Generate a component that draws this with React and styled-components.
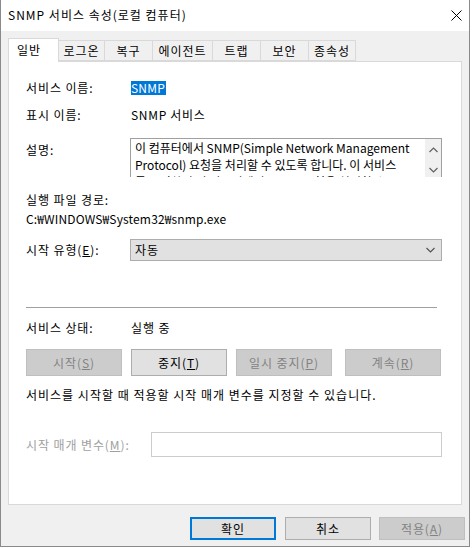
import React from 'react';
import styled, { createGlobalStyle } from 'styled-components';

const GlobalStyle = createGlobalStyle`
    html, body {
        margin: 0;
        padding: 0;
        background: #ffffff;
    }
    body {
        font-family: "Noto Sans CJK KR", "Noto Sans", sans-serif;
        font-size: 12px;
        letter-spacing: 0.9px;
        color: #000;
    }
`

const tabs = ['일반', '로그온', '복구', '에이전트', '트랩', '보안', '종속성']
const tabWidths = [51, 46, 48, 60, 48, 48, 47]

function Key({ children }) {
    return <u>{children}</u>
}

function App() {
    return (
        <>
            <GlobalStyle />
            <Window>
                <TitleBar>
                    <Title>SNMP 서비스 속성(로컬 컴퓨터)</Title>
                    <CloseBtn>
                        <svg width="11" height="11" viewBox="0 0 11 11">
                            <path d="M0.5 0.5 L10.5 10.5 M10.5 0.5 L0.5 10.5" stroke="#000" strokeWidth="1" fill="none" />
                        </svg>
                    </CloseBtn>
                </TitleBar>
                <Body>
                    <TabStrip>
                        {tabs.map((t, i) => (
                            <Tab key={t} $active={i === 0} $w={tabWidths[i]}>{t}</Tab>
                        ))}
                    </TabStrip>
                    <Panel>
                        <Row $h={16}>
                            <Label>서비스 이름:</Label>
                            <Selected>SNMP</Selected>
                        </Row>
                        <Row $h={16} $mt={11}>
                            <Label>표시 이름:</Label>
                            <Value $ls={0.7}>SNMP 서비스</Value>
                        </Row>
                        <Row $h={39} $mt={15} $top>
                            <Label $pt={4}>설명:</Label>
                            <DescBox>
                                <DescText>
                                    <div>이 컴퓨터에서 SNMP(Simple Network Management</div>
                                    <div>Protocol) 요청을 처리할 수 있도록 합니다. 이 서비스</div>
                                    <div>를 중지하면 이 컴퓨터에서 SNMP 요청을 처리할 수</div>
                                </DescText>
                                <ScrollBar>
                                    <svg width="9" height="6" viewBox="0 0 9 6">
                                        <path d="M0.5 5 L4.5 1 L8.5 5" stroke="#606060" strokeWidth="1.2" fill="none" />
                                    </svg>
                                    <svg width="9" height="6" viewBox="0 0 9 6">
                                        <path d="M0.5 1 L4.5 5 L8.5 1" stroke="#606060" strokeWidth="1.2" fill="none" />
                                    </svg>
                                </ScrollBar>
                            </DescBox>
                        </Row>
                        <Row $h={16} $mt={15}>
                            <Label>실행 파일 경로:</Label>
                        </Row>
                        <Row $h={16} $mt={3}>
                            <Value $ls={0.15}>C:₩WINDOWS₩System32₩snmp.exe</Value>
                        </Row>
                        <Row $h={22} $mt={12}>
                            <Label>시작 유형(<Key>E</Key>):</Label>
                            <Select>
                                <span>자동</span>
                                <svg width="9" height="6" viewBox="0 0 9 6">
                                    <path d="M0.5 1 L4.5 5 L8.5 1" stroke="#505050" strokeWidth="1.1" fill="none" />
                                </svg>
                            </Select>
                        </Row>
                        <Separator />
                        <Row $h={16} $mt={12}>
                            <Label>서비스 상태:</Label>
                            <Value>실행 중</Value>
                        </Row>
                        <ButtonRow>
                            <CtlButton $disabled>시작(<Key>S</Key>)</CtlButton>
                            <CtlButton>중지(<Key>T</Key>)</CtlButton>
                            <CtlButton $disabled>일시 중지(<Key>P</Key>)</CtlButton>
                            <CtlButton $disabled $ml={13}>계속(<Key>R</Key>)</CtlButton>
                        </ButtonRow>
                        <Row $h={16} $mt={11}>
                            <Value $ls={1}>서비스를 시작할 때 적용할 시작 매개 변수를 지정할 수 있습니다.</Value>
                        </Row>
                        <Row $h={25} $mt={29}>
                            <Label $w={125} $disabled>시작 매개 변수(<Key>M</Key>):</Label>
                            <ParamInput />
                        </Row>
                    </Panel>
                    <Footer>
                        <DlgButton $default>확인</DlgButton>
                        <DlgButton>취소</DlgButton>
                        <DlgButton $disabled>적용(<Key>A</Key>)</DlgButton>
                    </Footer>
                </Body>
            </Window>
        </>
    )
}

export default App;

// Styled Components

const Window = styled.div`
    width: 468px;
    height: 546px;
    border: 1px solid #8a8a8a;
    border-top: none;
    display: flex;
    flex-direction: column;
    background: #f0f0f0;
`

const TitleBar = styled.div`
    height: 31px;
    background: #ffffff;
    display: flex;
    align-items: center;
    justify-content: space-between;
    padding: 0 7px 0 7px;
    flex-shrink: 0;
`

const Title = styled.div`
    font-size: 12px;
    line-height: 16px;
    letter-spacing: 1px;
    margin-top: -1px;
`

const CloseBtn = styled.div`
    width: 11px;
    height: 11px;
    margin-top: -1px;
    display: flex;
    svg{ display: block; }
`

const Body = styled.div`
    flex: 1;
    display: flex;
    flex-direction: column;
    padding: 7px 0 0 7px;
`

const TabStrip = styled.div`
    display: flex;
    align-items: flex-end;
    height: 23px;
    position: relative;
    z-index: 1;
`

const Tab = styled.div`
    box-sizing: border-box;
    width: ${p => p.$w}px;
    height: ${p => p.$active ? 24 : 21}px;
    margin-bottom: ${p => p.$active ? -1 : 0}px;
    background: ${p => p.$active ? '#ffffff' : '#f0f0f0'};
    border: 1px solid #d9d9d9;
    border-bottom: ${p => p.$active ? 'none' : '1px solid #d9d9d9'};
    border-left: ${p => p.$active ? '1px solid #d9d9d9' : 'none'};
    display: flex;
    align-items: center;
    justify-content: ${p => p.$active ? 'flex-start' : 'center'};
    padding-left: ${p => p.$active ? 8 : 0}px;
    padding-bottom: ${p => p.$active ? 2 : 0}px;
    font-size: 12px;
    line-height: 16px;
    white-space: nowrap;
`

const Panel = styled.div`
    box-sizing: border-box;
    width: 454px;
    height: 444px;
    background: #ffffff;
    border: 1px solid #d9d9d9;
    padding: 18px 0 0 17px;
    display: flex;
    flex-direction: column;
`

const Row = styled.div`
    display: flex;
    align-items: ${p => p.$top ? 'flex-start' : 'center'};
    height: ${p => p.$h}px;
    margin-top: ${p => p.$mt || 0}px;
    flex-shrink: 0;
`

const Label = styled.div`
    width: ${p => p.$w || 105}px;
    flex-shrink: 0;
    font-size: 12px;
    line-height: 16px;
    padding-top: ${p => p.$pt || 0}px;
    color: ${p => p.$disabled ? '#a0a0a0' : '#000'};
    white-space: nowrap;
`

const Value = styled.div`
    font-size: 12px;
    line-height: 16px;
    letter-spacing: ${p => p.$ls ?? 0.9}px;
    white-space: nowrap;
`

const Selected = styled.div`
    background: #0078d7;
    color: #ffffff;
    font-size: 12px;
    line-height: 14px;
    height: 14px;
    letter-spacing: 0.2px;
    padding: 0 1px 0 0;
`

const DescBox = styled.div`
    box-sizing: border-box;
    width: 312px;
    height: 39px;
    margin-left: -1px;
    border: 1px solid #a0a0a0;
    border-bottom: none;
    display: flex;
    overflow: hidden;
`

const DescText = styled.div`
    flex: 1;
    padding: 0 0 0 4px;
    font-size: 12px;
    line-height: 17px;
    letter-spacing: 0;
    white-space: nowrap;
    overflow: hidden;
`

const ScrollBar = styled.div`
    width: 16px;
    background: #f0f0f0;
    display: flex;
    flex-direction: column;
    align-items: center;
    justify-content: space-between;
    padding: 8px 0 4px 0;
    box-sizing: border-box;
    svg{ display: block; }
`

const Select = styled.div`
    box-sizing: border-box;
    width: 312px;
    height: 22px;
    margin-left: -1px;
    background: #e1e1e1;
    border: 1px solid #adadad;
    display: flex;
    align-items: center;
    justify-content: space-between;
    padding: 0 6px 0 4px;
    font-size: 12px;
    line-height: 16px;
    svg{ display: block; }
`

const Separator = styled.div`
    width: 411px;
    height: 1px;
    background: #a0a0a0;
    margin-top: 46px;
    flex-shrink: 0;
`

const ButtonRow = styled.div`
    display: flex;
    gap: 9px;
    margin-top: 13px;
    flex-shrink: 0;
`

const CtlButton = styled.div`
    box-sizing: border-box;
    width: 96px;
    height: 27px;
    margin-left: ${p => p.$ml ? p.$ml - 9 : 0}px;
    background: ${p => p.$disabled ? '#cccccc' : '#e1e1e1'};
    border: 1px solid ${p => p.$disabled ? '#bfbfbf' : '#adadad'};
    color: ${p => p.$disabled ? '#838383' : '#000'};
    display: flex;
    align-items: center;
    justify-content: center;
    font-size: 12px;
    line-height: 16px;
    white-space: nowrap;
`

const ParamInput = styled.div`
    box-sizing: border-box;
    width: 291px;
    height: 25px;
    border: 1px solid #cccccc;
    background: #ffffff;
`

const Footer = styled.div`
    display: flex;
    justify-content: flex-end;
    gap: 8px;
    padding: 12px 4px 0 0;
`

const DlgButton = styled.div`
    box-sizing: border-box;
    width: 86px;
    height: 23px;
    background: ${p => p.$disabled ? '#cccccc' : '#e1e1e1'};
    border: ${p => p.$default ? '2px solid #0078d7' : p.$disabled ? '1px solid #bfbfbf' : '1px solid #adadad'};
    color: ${p => p.$disabled ? '#838383' : '#000'};
    margin-right: ${p => p.$default ? 1 : 0}px;
    display: flex;
    align-items: center;
    justify-content: center;
    font-size: 12px;
    line-height: 16px;
`
